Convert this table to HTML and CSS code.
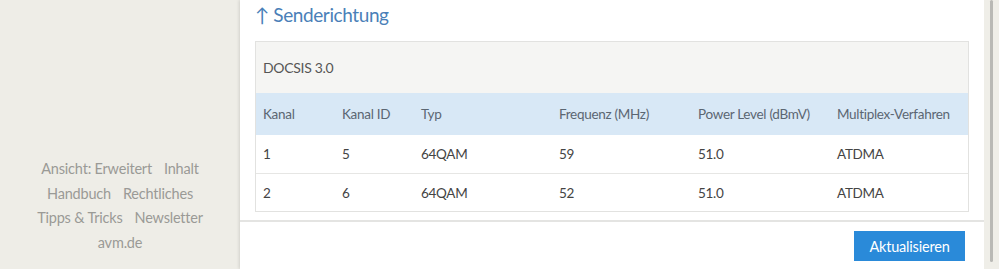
FILE: index.html
```html
<!DOCTYPE html>
<html lang="de">
<head>
    <meta charset="UTF-8">
    <title>Kabel-Informationen</title>
    <link rel="stylesheet" href="styles.css">
</head>
<body>

    <aside class="sidebar">
        <nav class="footer-links">
            <div class="link-row"><a href="#">Ansicht: Erweitert</a><a href="#">Inhalt</a></div>
            <div class="link-row"><a href="#">Handbuch</a><a href="#">Rechtliches</a></div>
            <div class="link-row"><a href="#">Tipps &amp; Tricks</a><a href="#">Newsletter</a></div>
            <div class="link-row"><a href="#">avm.de</a></div>
        </nav>
    </aside>

    <main class="page">
        <div class="page-body">
            <h2 class="section-title">&uarr; Senderichtung</h2>

            <div class="channel-box">
                <div class="channel-caption">DOCSIS 3.0</div>
                <table class="channels">
                    <thead>
                        <tr>
                            <th class="c-kanal">Kanal</th>
                            <th class="c-id">Kanal ID</th>
                            <th class="c-typ">Typ</th>
                            <th class="c-freq">Frequenz (MHz)</th>
                            <th class="c-power">Power Level (dBmV)</th>
                            <th>Multiplex-Verfahren</th>
                        </tr>
                    </thead>
                    <tbody>
                        <tr>
                            <td>1</td><td>5</td><td>64QAM</td><td>59</td><td>51.0</td><td>ATDMA</td>
                        </tr>
                        <tr>
                            <td>2</td><td>6</td><td>64QAM</td><td>52</td><td>51.0</td><td>ATDMA</td>
                        </tr>
                    </tbody>
                </table>
            </div>
        </div>

        <div class="button-bar">
            <button class="btn-primary">Aktualisieren</button>
        </div>
    </main>

    <div class="scroll-track"><div class="scroll-thumb"></div></div>

</body>
</html>
```

FILE: styles.css
```css
html, body {
    height: 100%;
}

body {
    margin: 0;
    display: flex;
    font-family: Lato, "Open Sans", sans-serif;
    background-color: #eeede7;
    color: #444;
    overflow: hidden;
}

/* linke Spalte mit den Fusszeilen-Links */
.sidebar {
    width: 240px;
    flex-shrink: 0;
    display: flex;
    flex-direction: column;
    justify-content: flex-end;
    padding-bottom: 14px;
    box-sizing: border-box;
}

.footer-links {
    display: flex;
    flex-direction: column;
    align-items: center;
}

.link-row {
    display: flex;
    justify-content: center;
    gap: 12px;
    line-height: 24.5px;
    font-size: 14.5px;
    letter-spacing: -0.2px;
}

.link-row a {
    color: #9a9a96;
    text-decoration: none;
}

/* Inhaltsbereich */
.page {
    flex: 1;
    background-color: #fff;
    display: flex;
    flex-direction: column;
    box-shadow: -1px 0 3px rgba(0, 0, 0, 0.12);
}

.page-body {
    padding: 0 15px 8px 15px;
    border-bottom: 2px solid #e4e4e2;
}

.section-title {
    margin: 0;
    font-weight: normal;
    font-size: 19px;
    line-height: 30px;
    letter-spacing: -0.4px;
    color: #4a7fb8;
    padding-bottom: 11px;
}

.channel-box {
    border: 1px solid #e2e2e0;
}

.channel-caption {
    background-color: #f5f5f3;
    height: 51px;
    line-height: 52px;
    padding-left: 7px;
    font-size: 14px;
    letter-spacing: -0.3px;
    color: #555;
}

.channels {
    width: 100%;
    table-layout: fixed;
    border-collapse: collapse;
    font-size: 13.5px;
    letter-spacing: -0.3px;
}

.channels th {
    background-color: #d8e8f6;
    color: #5b6672;
    font-weight: normal;
    text-align: left;
    white-space: nowrap;
    height: 42px;
    padding: 0 7px;
}

.channels td {
    height: 37px;
    padding: 0 7px;
    border-top: 1px solid #e6e6e4;
    color: #444;
}

.channels tbody tr:first-child td {
    border-top: none;
    height: 38px;
}

.c-kanal, .c-id {
    width: 65px;
}

.c-typ {
    width: 124px;
}

.c-freq, .c-power {
    width: 125px;
}

.button-bar {
    display: flex;
    justify-content: flex-end;
    padding: 9px 19px 0 0;
}

.btn-primary {
    background-color: #2a8ad9;
    color: #fff;
    border: none;
    font-family: inherit;
    font-size: 14.5px;
    letter-spacing: -0.2px;
    height: 30px;
    width: 111px;
    padding: 0;
    cursor: pointer;
}

/* Scrollleiste am rechten Rand */
.scroll-track {
    width: 15px;
    flex-shrink: 0;
    background-color: #efeee8;
    display: flex;
    justify-content: center;
}

.scroll-thumb {
    width: 3px;
    height: 262px;
    background-color: #b9b9b5;
    border-radius: 2px;
}
```
